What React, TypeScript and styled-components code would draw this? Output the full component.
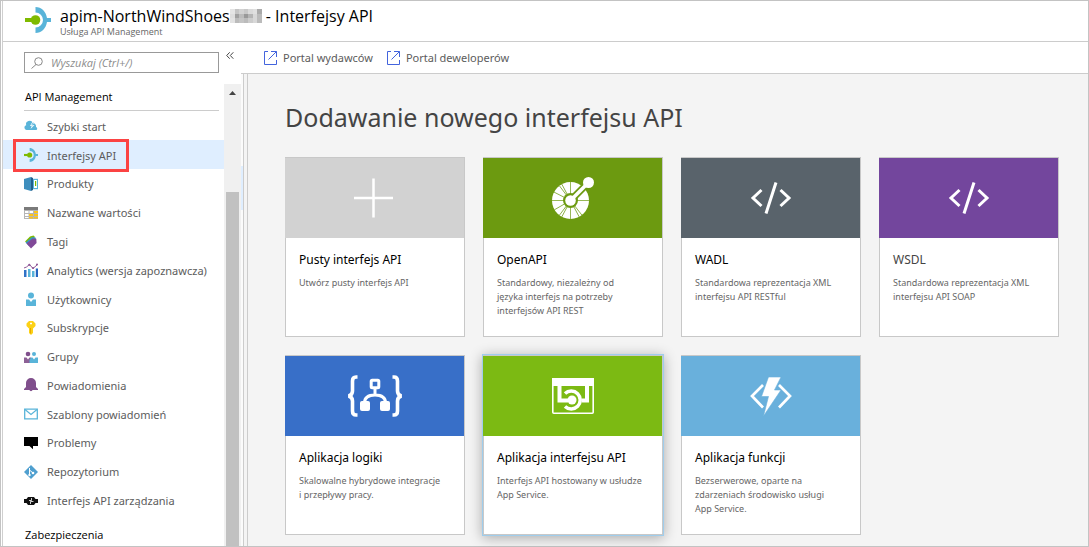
import React from "react";
import styled, { createGlobalStyle, css } from "styled-components";

const Global = createGlobalStyle`
  * { box-sizing: border-box; }
  body { margin: 0; background: #fff; font-family: "Noto Sans", "Open Sans", sans-serif; font-size: 11px; color: #5c5c5c; }
  h1, h2, h3, p, ul { margin: 0; padding: 0; font-weight: 400; }
  ul { list-style: none; }
  a { color: inherit; text-decoration: none; }
  button, input { font: inherit; color: inherit; }
`;

const Frame = styled.div`
  display: flex;
  flex-direction: column;
  min-height: 100vh;
  border: 1px solid #c3c3c3;
  padding-left: 1px;
`;
const Blade = styled.div`
  display: flex;
  flex-direction: column;
  flex: 1;
  border-left: 1px solid #cfcfcf;
`;
const Header = styled.header`
  display: flex;
  gap: 9px;
  padding: 6px 22px 4px;
  height: 41px;
  border-bottom: 1px solid #ccc;
`;
const HeaderText = styled.div`
  display: flex;
  flex-direction: column;
  font-family: "Open Sans", "Noto Sans", sans-serif;
`;
const Title = styled.h1`
  display: flex;
  align-items: center;
  font-size: 16px;
  line-height: 18px;
  font-weight: 500;
  color: #000;
  white-space: pre;
`;
const Subtitle = styled.p`
  font-size: 9px;
  line-height: 14px;
  color: #666;
`;
const Columns = styled.div`
  display: flex;
  flex: 1;
`;
const Sidebar = styled.aside`
  display: flex;
  flex-direction: column;
  width: 238px;
  flex: none;
`;
const SearchRow = styled.div`
  display: flex;
  align-items: flex-start;
  gap: 7px;
  padding: 10px 7px 11px 21px;
`;
const SearchBox = styled.label`
  display: flex;
  align-items: center;
  gap: 8px;
  width: 195px;
  height: 21px;
  padding-left: 6px;
  border: 1px solid #999;
`;
const SearchInput = styled.input`
  flex: 1;
  min-width: 0;
  padding: 0;
  border: 0;
  outline: 0;
  background: none;
  font-family: "Open Sans", "Noto Sans", sans-serif;
  font-size: 11px;
  line-height: 16px;
  &::placeholder { color: #8c8c8c; font-style: italic; opacity: 1; }
`;
const Collapse = styled.button`
  display: flex;
  padding: 0;
  border: 0;
  background: none;
`;
const MenuArea = styled.div`
  display: flex;
  flex: 1;
`;
const Menu = styled.nav`
  display: flex;
  flex-direction: column;
  flex: 1;
`;
const Group = styled.h2`
  margin: 0 5px 0 21px;
  padding: 4px 0 4px 1px;
  height: 27px;
  border-bottom: 1px solid #ccc;
  font-family: "Open Sans", "Noto Sans", sans-serif;
  font-size: 11px;
  line-height: 18px;
  font-weight: 500;
  color: #000;
  &:last-child {
    height: 32px;
    padding-top: 12px;
    border: 0;
  }
`;
const Items = styled.ul`
  display: flex;
  flex-direction: column;
  flex: 1;
`;
const Item = styled.li<{ $active?: boolean }>`
  position: relative;
  display: flex;
  flex: 1 1 28px;
  max-height: 29px;
  ${(p) => p.$active && css`background: #dfeeff;`}
`;
const ItemLink = styled.a`
  display: flex;
  flex: 1;
  align-items: center;
  gap: 9px;
  padding: 2px 0 0 21px;
  white-space: nowrap;
`;
const Highlight = styled.span`
  position: absolute;
  left: 10px;
  top: -1px;
  width: 116px;
  height: 33px;
  border: 3px solid #fb4343;
  pointer-events: none;
`;
const Scrollbar = styled.div`
  display: flex;
  flex-direction: column;
  align-items: center;
  width: 17px;
  background: #f0f0f0;
`;
const Arrow = styled.svg`
  margin: 7px 0 97px;
`;
const Thumb = styled.div`
  flex: 1;
  width: 13px;
  background: #c1c1c1;
`;
const Main = styled.main`
  display: flex;
  flex-direction: column;
  flex: 1;
  min-width: 0;
`;
const Toolbar = styled.div`
  display: flex;
  gap: 14px;
  height: 32px;
  padding-left: 23px;
  border-bottom: 1px solid #ccc;
`;
const Tool = styled.button`
  display: flex;
  align-items: center;
  gap: 6px;
  padding: 0;
  border: 0;
  background: none;
`;
const Body = styled.div`
  display: flex;
  flex: 1;
`;
const Edge = styled.div`
  width: 2px;
  padding-top: 92px;
  background: #fbfbfb;
`;
const EdgeMark = styled.div`
  height: 44px;
  background: #dfeeff;
`;
const Gutter = styled.div`
  width: 5px;
  border: solid #ccc;
  border-width: 0 1px;
  background: #f4f4f4;
`;
const Content = styled.section`
  flex: 1;
  padding: 26px 20px 11px 37px;
  background: #f4f4f4;
`;
const Heading = styled.h2`
  margin-bottom: 23px;
  font-size: 25px;
  line-height: 34px;
  color: #444;
`;
const Cards = styled.div`
  display: grid;
  grid-template-columns: repeat(auto-fill, 180px);
  gap: 18px;
`;
const Card = styled.button<{ $hover?: boolean }>`
  display: flex;
  flex-direction: column;
  height: 180px;
  padding: 0;
  border: 1px solid #c8c8c8;
  border-left: 0;
  background: #fff;
  text-align: left;
  ${(p) => p.$hover && css`box-shadow: 0 0 0 1px #9fcdec, 0 2px 12px 1px rgba(0, 0, 0, 0.3);`}
`;
const Banner = styled.span<{ $color: string }>`
  display: flex;
  align-items: center;
  justify-content: center;
  align-self: stretch;
  height: 80px;
  background: ${(p) => p.$color};
`;
const CardText = styled.span`
  display: flex;
  flex-direction: column;
  flex: 1;
  align-self: stretch;
  gap: 7px;
  padding: 13px 6px 0 13px;
  border-left: 1px solid #c8c8c8;
`;
const CardTitle = styled.span<{ $soft?: boolean }>`
  font-size: 12px;
  line-height: 18px;
  color: ${(p) => (p.$soft ? "#444" : "#000")};
`;
const CardDesc = styled.span`
  font-size: 9px;
  line-height: 14px;
  white-space: pre-line;
  color: #666;
`;

const Svg = ({ children }: { children: React.ReactNode }) => (
  <svg width="14" height="14" viewBox="0 0 14 14" aria-hidden="true">{children}</svg>
);

const ApiMark = ({ size }: { size: number }) => (
  <svg width={size} height={size} viewBox="0 0 26 26" aria-hidden="true">
    <path d="M10.500 0C16.500 0 21 4.600 22 11h4v4h-4C21 21.400 16.500 26 10.500 26v-5.500a7.500 7.500 0 0 0 0-15z" fill="#59b4d9" />
    <path d="M0 11h7v4H0z" fill="#7fba00" />
    <circle cx="10.500" cy="13" r="4.800" fill="#7fba00" />
  </svg>
);

const icons: Record<string, React.ReactNode> = {
  cloud: (
    <Svg>
      <path d="M2.500 11A2.400 2.400 0 0 1 2.200 6.300 3.500 3.500 0 0 1 8.800 4 3.300 3.300 0 0 1 12 8a1.600 1.600 0 0 1 .3 3z" fill="#59b4d9" />
      <path d="M8.300 3 6 7h1.700L6.500 10 10.500 6H8.600L10.500 3z" fill="#fff" />
      <path d="M8.800 3.500 7.200 6.300h1.600l-.6 1.200L9.500 6.300H8.200L9.700 3.500z" fill="#59b4d9" />
    </Svg>
  ),
  api: <ApiMark size={14} />,
  box: (
    <Svg>
      <path d="M0 2 7 0v14l-7-2z" fill="#3e8ebd" />
      <path d="m7 0 2 1v12l-2 1z" fill="#215f8c" />
      <path d="M9 1.800h5v10.400H9z" fill="#59b4d9" />
      <path d="M10 3h3v8h-3z" fill="#fff" />
      <path d="M11 4h1.200v5H11z" fill="#7fba00" />
    </Svg>
  ),
  table: (
    <Svg>
      <path d="M0 1h14v12H0z" fill="#b5b5b5" />
      <path d="M0 1h14v3H0z" fill="#7a7a7a" />
      <path d="M1 5h3.500v2H1zM1 8h3.500v2H1zM1 11h3.500v1H1zM5.500 5H9v2H5.500z" fill="#fff" />
      <path d="M10 5h4v2h-4zM5 8h4v2H5zM10 8h4v2h-4zM5 11h4v1.500H5zM10 11h4v1.500h-4z" fill="#fcc419" />
    </Svg>
  ),
  tag: (
    <Svg>
      <path d="m1 6.500 5-5L9.500.500 11 2 4.500 9z" fill="#7fba00" />
      <path d="M1.500 7.500 8 2l3.500.500L12 5 5 11z" fill="#3997c0" />
      <path d="m2.500 8.500 6-5 3.800.3.300 4.200L7 13.500z" fill="#804998" />
    </Svg>
  ),
  analytics: (
    <Svg>
      <path d="M0 7h2.500v7H0z" fill="#3072c6" />
      <path d="M4 6h2.500v8H4zM8 8h2.500v6H8z" fill="#59b4d9" />
      <path d="M11.800 5.500H14V14h-2.200z" fill="#2565c0" />
      <path d="m0 5 2.500-1 3-2.500 3.500 4 4.500-4" fill="none" stroke="#8d5596" />
      <circle cx="5.300" cy="1.800" r="1.100" fill="#8d5596" /><circle cx="9" cy="5" r="1.100" fill="#8d5596" /><circle cx="13" cy="1.400" r="1" fill="#8d5596" />
    </Svg>
  ),
  user: (
    <Svg>
      <circle cx="7" cy="3.500" r="3" fill="#59b4d9" />
      <path d="M2 7.500h3l2 2.500 2-2.500h3V14H2z" fill="#59b4d9" />
    </Svg>
  ),
  key: (
    <Svg>
      <path fillRule="evenodd" d="M5 0h4l2.500 2.500v2.500L9 7.500V12l-2 2-2-2V7.500L2.500 5V2.500zM6 1.800v1.400h2V1.800z" fill="#fcd116" />
      <path d="M6.500 7v5.500" stroke="#e8a800" />
    </Svg>
  ),
  group: (
    <Svg>
      <circle cx="4" cy="4" r="2.300" fill="#804f8c" /><circle cx="10" cy="4" r="2" fill="#59b4d9" />
      <path d="M0 7.500h2.500L4 9.500l1.500-2H7V13H0z" fill="#8d6196" />
      <path d="M7 7.500h1.500l1.500 2 1.500-2H14V13H5.500v-3z" fill="#59b4d9" />
    </Svg>
  ),
  bell: (
    <Svg>
      <path d="M7 0a5 5 0 0 1 5 5v4l2 2v1H8.600a1.700 1.700 0 0 1-3.200 0H0v-1l2-2V5a5 5 0 0 1 5-5z" fill="#804f8c" />
    </Svg>
  ),
  mail: (
    <Svg>
      <path d="M.7 2.200h12.600v9.600H.7z" fill="none" stroke="#59b4d9" strokeWidth="1.300" />
      <path d="m1 2.500 6 5 6-5" fill="none" stroke="#59b4d9" strokeWidth="1.200" />
    </Svg>
  ),
  comment: (
    <Svg><path d="M0 1h14v9H9v3.200L5.500 10H0z" fill="#000" /></Svg>
  ),
  git: (
    <Svg>
      <path d="m7 0 7 7-7 7-7-7z" fill="#4f9fcf" />
      <path d="M5.500 3v8M5.500 5 9 8" stroke="#fff" fill="none" />
      <circle cx="5.500" cy="10" r="1.200" fill="#fff" /><circle cx="9" cy="8" r="1.300" fill="#fff" />
    </Svg>
  ),
  plug: (
    <Svg>
      <path d="M0 5h2.500L4 3h6L11.500 5H14v4h-2.500L10 11H4L2.500 9H0z" fill="#111" />
      <path d="M7.500 4v2.500H5M6.500 10V7.500h3" stroke="#fff" fill="none" strokeWidth="0.800" />
    </Svg>
  ),
};

const menu: [string, string][] = [
  ["cloud", "Szybki start"],
  ["api", "Interfejsy API"],
  ["box", "Produkty"],
  ["table", "Nazwane wartości"],
  ["tag", "Tagi"],
  ["analytics", "Analytics (wersja zapoznawcza)"],
  ["user", "Użytkownicy"],
  ["key", "Subskrypcje"],
  ["group", "Grupy"],
  ["bell", "Powiadomienia"],
  ["mail", "Szablony powiadomień"],
  ["comment", "Problemy"],
  ["git", "Repozytorium"],
  ["plug", "Interfejs API zarządzania"],
];

const External = () => (
  <svg width="13" height="14" viewBox="0 0 13 14" fill="none" stroke="#4364dd" aria-hidden="true">
    <path d="M4 .5H.5v13h12V9M7 .5h5.500V6M12.500.500l-8 8" />
  </svg>
);

const CodeGlyph = () => (
  <svg width="42" height="32" viewBox="0 0 42 32" fill="none" stroke="#fff" strokeWidth="3" aria-hidden="true">
    <path d="M11.500 8 3 16l8.500 8M30.500 8l8.500 8-8.500 8M26 .500l-10 31" />
  </svg>
);

const spokes = [0, 52, 62, 90, 118, 127, 150, 180, 207, 233, 242, 270];

const art: Record<string, React.ReactNode> = {
  plus: (
    <svg width="42" height="40" viewBox="0 0 42 40" stroke="#fff" strokeWidth="2.500"><path d="M19.500 .5v39M0 20h39" /></svg>
  ),
  openapi: (
    <svg width="42" height="42" viewBox="0 0 42 42">
      <circle cx="18.500" cy="23.500" r="18.500" fill="#fff" />
      {spokes.map((a) => (
        <path key={a} d="M18.500 23.500h18.500" stroke="#6c9a10" strokeWidth="0.700" transform={`rotate(${a} 18.500 23.500)`} />
      ))}
      <circle cx="18.500" cy="23.500" r="7.500" fill="#6c9a10" />
      <path d="M18.500 23.500 36.500 5.500" stroke="#6c9a10" strokeWidth="7" />
      <path d="M18.500 23.500 36.500 5.500" stroke="#fff" strokeWidth="3.500" />
      <circle cx="18.500" cy="23.500" r="5.300" fill="#fff" />
      <circle cx="36.500" cy="5.500" r="5.500" fill="#fff" />
    </svg>
  ),
  code: <CodeGlyph />,
  logic: (
    <svg width="54" height="42" viewBox="0 0 54 42" fill="none" stroke="#fff" strokeWidth="3.600">
      <path d="M9.500 2H8Q4.500 2 4.500 6v10q0 4-4 5 4 1 4 5v10q0 4 3.500 4h1.500" />
      <path d="M44.500 2H46q3.500 0 3.500 4v10q0 4 4 5-4 1-4 5v10q0 4-3.500 4h-1.500" />
      <rect x="23.200" y="5.200" width="7.600" height="7.600" strokeWidth="3" rx="1" />
      <path d="M27 14v5M16.500 28c0-6 4-8 10.500-8s10.500 2 10.500 8" strokeWidth="3" />
      <rect x="12" y="26" width="10" height="10" rx="2" fill="#fff" stroke="none" />
      <rect x="32" y="26" width="10" height="10" rx="2" fill="#fff" stroke="none" />
    </svg>
  ),
  apiapp: (
    <svg width="42" height="36" viewBox="0 0 42 36" fill="none" stroke="#fff">
      <rect x=".8" y=".8" width="40.400" height="34.400" strokeWidth="1.600" rx="1" />
      <path d="M0 0h42v8H0z" fill="#fff" stroke="none" />
      <path d="M7.500 7v15.500H16M35 7v15.500h-5.500" strokeWidth="4" />
      <circle cx="20" cy="22" r="4.500" fill="#fff" stroke="none" />
      <path d="M13 15.500A9 9 0 1 1 13 28.500" strokeWidth="3.500" />
    </svg>
  ),
  func: (
    <svg width="42" height="39" viewBox="0 0 42 39">
      <path d="M13 8 2 19l11 11.500M29 8l11 11-11 11.500" fill="none" stroke="#fff" strokeWidth="2.700" />
      <path d="M18.500 0H31l-6.500 13H31L13.500 39l5-19.500H11.500z" fill="#fff" stroke="#69b0dc" strokeWidth="0.600" />
    </svg>
  ),
};

const cards = [
  { art: "plus", color: "#d2d2d2", title: "Pusty interfejs API", desc: "Utwórz pusty interfejs API" },
  { art: "openapi", color: "#6c9a10", title: "OpenAPI", desc: "Standardowy, niezależny od\njęzyka interfejs na potrzeby\ninterfejsów API REST" },
  { art: "code", color: "#59636b", title: "WADL", desc: "Standardowa reprezentacja XML\ninterfejsu API RESTful" },
  { art: "code", color: "#73469d", title: "WSDL", desc: "Standardowa reprezentacja XML\ninterfejsu API SOAP", soft: true },
  { art: "logic", color: "#386fc8", title: "Aplikacja logiki", desc: "Skalowalne hybrydowe integracje\ni przepływy pracy." },
  { art: "apiapp", color: "#7cba13", title: "Aplikacja interfejsu API", desc: "Interfejs API hostowany w usłudze\nApp Service.", hover: true },
  { art: "func", color: "#69b0dc", title: "Aplikacja funkcji", desc: "Bezserwerowe, oparte na\nzdarzeniach środowisko usługi\nApp Service." },
];

const shades = [
  "#e4e4e4", "#c4c4c4", "#d2d2d2", "#c8c8c8", "#dadada", "#e0e0e0", "#aaa",
  "#ddd", "#a0a0a0", "#bbb", "#999", "#b4b4b4", "#d8d8d8", "#bbb",
  "#e2e2e2", "#bbb", "#c4c4c4", "#bbb", "#ccc", "#d8d8d8", "#bbb",
];
const Mosaic = () => (
  <svg width="32" height="14" viewBox="0 0 35 15" preserveAspectRatio="none" shapeRendering="crispEdges" aria-hidden="true">
    {shades.map((c, i) => <rect key={i} x={(i % 7) * 5} y={Math.floor(i / 7) * 5} width="5" height="5" fill={c} />)}
  </svg>
);

export default function App() {
  return (
    <>
      <Global />
      <Frame>
        <Blade>
          <Header>
            <ApiMark size={26} />
            <HeaderText>
              <Title>apim-NorthWindShoes<Mosaic />{" - Interfejsy API"}</Title>
              <Subtitle>Usługa API Management</Subtitle>
            </HeaderText>
          </Header>
          <Columns>
            <Sidebar>
              <SearchRow>
                <SearchBox>
                  <svg width="12" height="12" viewBox="0 0 12 12" fill="none" stroke="#888" aria-hidden="true">
                    <circle cx="7.500" cy="4.500" r="3.800" /><path d="m5 7.500-4.500 4" />
                  </svg>
                  <SearchInput aria-label="Wyszukaj" placeholder="Wyszukaj (Ctrl+/)" />
                </SearchBox>
                <Collapse aria-label="Zwiń menu">
                  <svg width="8" height="7" viewBox="0 0 8 7" fill="none" stroke="#444" aria-hidden="true">
                    <path d="M3.700.300.700 3.500l3 3.200M7.300.300l-3 3.200 3 3.200" />
                  </svg>
                </Collapse>
              </SearchRow>
              <MenuArea>
                <Menu>
                  <Group>API Management</Group>
                  <Items>
                    {menu.map(([icon, label]) => (
                      <Item key={icon} $active={icon === "api"}>
                        <ItemLink href="#">{icons[icon]}{label}</ItemLink>
                        {icon === "api" && <Highlight />}
                      </Item>
                    ))}
                  </Items>
                  <Group>Zabezpieczenia</Group>
                </Menu>
                <Scrollbar>
                  <Arrow width="7" height="4" viewBox="0 0 7 4" aria-hidden="true"><path d="M3.500 0 7 4H0z" fill="#444" /></Arrow>
                  <Thumb />
                </Scrollbar>
              </MenuArea>
            </Sidebar>
            <Main>
              <Toolbar>
                <Tool><External />Portal wydawców</Tool>
                <Tool><External />Portal deweloperów</Tool>
              </Toolbar>
              <Body>
                <Edge><EdgeMark /></Edge>
                <Gutter />
                <Content>
                  <Heading>Dodawanie nowego interfejsu API</Heading>
                  <Cards>
                    {cards.map((c) => (
                      <Card key={c.title} $hover={c.hover}>
                        <Banner $color={c.color}>{art[c.art]}</Banner>
                        <CardText>
                          <CardTitle $soft={c.soft}>{c.title}</CardTitle>
                          <CardDesc>{c.desc}</CardDesc>
                        </CardText>
                      </Card>
                    ))}
                  </Cards>
                </Content>
              </Body>
            </Main>
          </Columns>
        </Blade>
      </Frame>
    </>
  );
}
